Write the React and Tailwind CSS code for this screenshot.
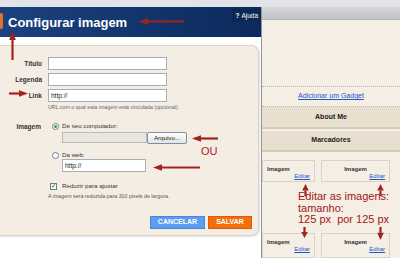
import React from "react";

const RED = "#a3231c";

// annotation arrows [x1, y1, x2, y2] — head at (x2, y2)
const ARROWS = [
  [184, 21.5, 139, 21.5],
  [12.5, 60, 12.5, 31],
  [9, 93.5, 28, 93.5],
  [218, 138.5, 192, 138.5],
  [200, 167.5, 153, 167.5],
  [305.5, 196, 305.5, 184],
  [380.5, 196, 380.5, 184],
  [304.5, 227, 304.5, 238],
  [380.5, 227, 380.5, 240],
];

const Arrow = ({ a }) => {
  const [x1, y1, x2, y2] = a;
  const len = Math.hypot(x2 - x1, y2 - y1);
  const ux = (x2 - x1) / len;
  const uy = (y2 - y1) / len;
  const head = Math.min(9, len * 0.55);
  const hw = 3.3;
  const bx = x2 - ux * head;
  const by = y2 - uy * head;
  return (
    <g>
      <line x1={x1} y1={y1} x2={bx} y2={by} stroke={RED} strokeWidth="2.2" />
      <polygon
        points={`${x2},${y2} ${bx - uy * hw},${by + ux * hw} ${bx + uy * hw},${by - ux * hw}`}
        fill={RED}
      />
    </g>
  );
};

const Field = ({ label, value }) => (
  <div className="flex items-center h-[13px]">
    <div className="w-[42px] text-right text-[6.5px] font-bold text-[#333]">{label}</div>
    <div className="ml-[6px] w-[119px] h-[13px] border border-[#a9aeb6] bg-white flex items-center pl-[2px] text-[6.5px] text-[#222]">
      {value}
    </div>
  </div>
);

const Radio = ({ checked }) => (
  <div className="w-[7px] h-[7px] rounded-full border border-[#6d7c92] bg-white flex items-center justify-center">
    {checked && <div className="w-[3px] h-[3px] rounded-full bg-[#3f9a3a]" />}
  </div>
);

const ImageBox = ({ className, center }) => (
  <div className={`h-full border border-[#d9d2c6] flex flex-col px-[4px] pt-[5px] ${className}`}>
    <div className={`text-[6px] font-bold text-[#333] leading-[7px] ${center ? "text-center" : ""}`}>Imagem</div>
    <div className="text-right text-[6px] text-[#2255cc] underline leading-[7px]">Editar</div>
  </div>
);

export default function App() {
  return (
    <div className="relative w-[400px] h-[258px] overflow-hidden bg-white font-['Liberation_Sans',Arial,sans-serif]">
      <div className="h-[7px] bg-[#e2e4ea]" />
      <div className="flex h-[251px]">
        {/* dialog */}
        <div className="w-[261px] flex flex-col">
          <div className="h-[30px] bg-linear-to-r from-[#1b4280] to-[#0c2a5c] flex items-center">
            <div className="w-[3px] h-[16px] bg-[#e8702a] rounded-r-[2px] -mt-[2px]" />
            <div className="ml-[5px] text-[13px] font-bold text-white leading-none">Configurar imagem</div>
            <div className="ml-auto self-start mt-[2px] h-[13px] px-[3px] bg-[#0c2753] flex items-center text-[6.5px] text-white">
              <span className="font-bold mr-[2px]">?</span>Ajuda
            </div>
          </div>
          <div className="flex-1 bg-white pt-[8px] pr-[2px]">
            <div className="h-[191px] bg-[#f3ede4] border border-l-0 border-[#ddd2bf] rounded-r-[8px] shadow-[1px_1px_2px_rgba(0,0,0,0.12)] pt-[11px]">
              <div className="flex flex-col gap-[3px]">
                <Field label="Título" value="" />
                <Field label="Legenda" value="" />
                <Field label="Link" value="http://" />
              </div>
              <div className="mt-[2px] pl-[48px] text-[5.3px] leading-[7px] text-[#666]">
                URL com o qual esta imagem está vinculada (opcional)
              </div>
              <div className="mt-[11px] flex">
                <div className="w-[41px] text-right text-[6.5px] font-bold text-[#333] leading-[8px] pt-[1px]">Imagem</div>
                <div className="ml-[11px] flex flex-col">
                  <div className="flex items-center h-[8px]">
                    <Radio checked />
                    <span className="ml-[3px] text-[6.2px] text-[#333]">De seu computador:</span>
                  </div>
                  <div className="mt-[2px] ml-[10px] flex items-start">
                    <div className="w-[85px] h-[11px] bg-[#e9e6e0] border border-[#bcb9b3]" />
                    <div className="w-[40px] h-[12px] border border-[#7e90a8] rounded-[2px] bg-linear-to-b from-white to-[#e4e4e4] flex items-center justify-center text-[6.2px] text-[#222]">
                      Arquivo...
                    </div>
                  </div>
                  <div className="mt-[7px] flex items-center h-[8px]">
                    <Radio />
                    <span className="ml-[3px] text-[6.2px] text-[#333]">Da web:</span>
                  </div>
                  <div className="ml-[10px] w-[84px] h-[13px] border border-[#a9aeb6] bg-white flex items-center pl-[2px] text-[6.5px] text-[#222]">
                    http://
                  </div>
                  <div className="mt-[10px] -ml-[2px] flex items-center h-[8px]">
                    <div className="w-[7px] h-[7px] border border-[#6d7c92] bg-white flex items-center justify-center text-[6px] leading-none text-[#2f8f2f] font-bold">
                      ✓
                    </div>
                    <span className="ml-[5px] text-[6.2px] text-[#333]">Reduzir para ajustar</span>
                  </div>
                </div>
              </div>
              <div className="mt-[3px] pl-[48px] text-[5.3px] leading-[7px] text-[#555]">
                A imagem será reduzida para 310 pixels de largura.
              </div>
              <div className="mt-[16px] flex justify-end pr-[6px] gap-[3px]">
                <div className="w-[55px] h-[13px] bg-[#5c9cf2] border border-[#4a86d8] flex items-center justify-center text-[7px] font-bold text-white">
                  CANCELAR
                </div>
                <div className="w-[44px] h-[13px] bg-[#f46f0c] border border-[#d95e05] flex items-center justify-center text-[7px] font-bold text-white">
                  SALVAR
                </div>
              </div>
            </div>
          </div>
        </div>
        <div className="w-px bg-[#8d94a2]" />
        {/* blog layout column */}
        <div className="flex-1 bg-[#f4eee5] flex flex-col">
          <div className="h-[13px] bg-linear-to-b from-[#d6d7dc] to-[#c2c3c8] border-b border-[#b3b4b9]" />
          <div className="h-[68px] border-b border-dotted border-[#b9b2a6]" />
          <div className="h-[21px] flex items-center justify-center border-b border-dotted border-[#b9b2a6]">
            <span className="text-[7px] text-[#2255cc] underline">Adicionar um Gadget</span>
          </div>
          <div className="h-[22px] bg-[#e8dfcf] border-b-2 border-[#d3cab9] flex items-center justify-center text-[7px] font-bold text-[#222]">
            About Me
          </div>
          <div className="mt-[2px] h-[22px] bg-[#e8dfcf] border-b-2 border-[#d3cab9] flex items-center justify-center text-[7px] font-bold text-[#222]">
            Marcadores
          </div>
          <div className="mt-[8px] h-[22px] flex">
            <ImageBox className="w-[53px]" />
            <ImageBox className="ml-[6px] w-[69px]" center />
          </div>
          <div className="mt-[9px] pl-[36px] text-[11px] leading-[11.5px] text-[#a01818] whitespace-pre">
            {"Editar as imagens:\ntamanho:\n125 px  por 125 px"}
          </div>
          <div className="mt-[7px] h-[26px] flex">
            <ImageBox className="w-[53px]" />
            <ImageBox className="ml-[6px] w-[69px]" center />
          </div>
        </div>
      </div>
      <div className="absolute left-[201px] top-[146px] text-[11px] text-[#b02020] leading-none">OU</div>
      <svg className="absolute inset-0 pointer-events-none" width="400" height="258">
        {ARROWS.map((a, i) => (
          <Arrow key={i} a={a} />
        ))}
      </svg>
    </div>
  );
}
